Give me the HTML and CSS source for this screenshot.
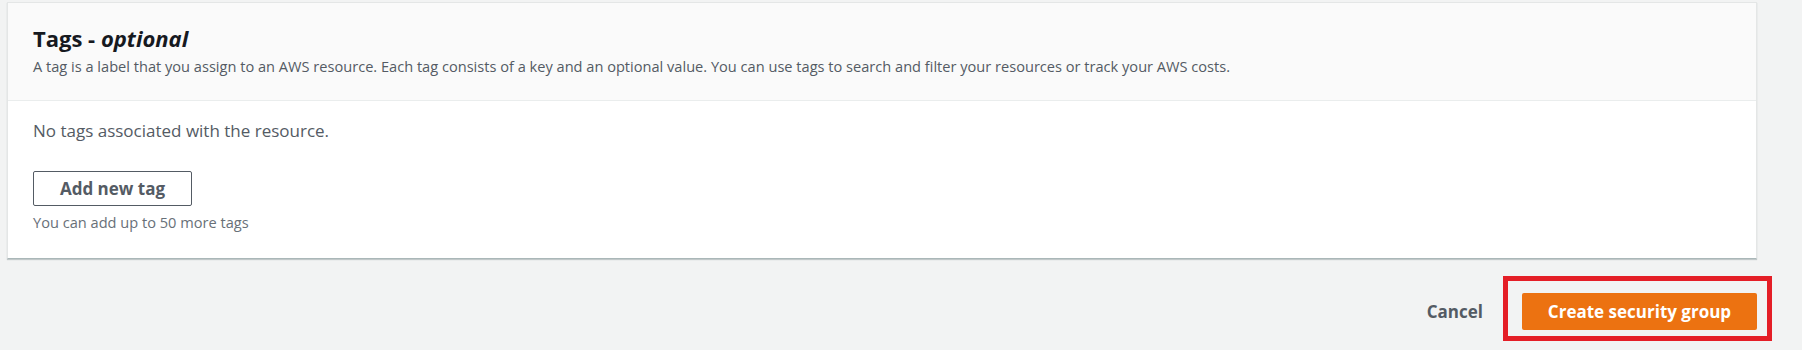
FILE: index.html
```html
<!DOCTYPE html>
<html lang="en">
<head>
    <meta charset="UTF-8">
    <meta name="viewport" content="width=device-width, initial-scale=1.0">
    <title>Create security group - Tags</title>
    <link rel="stylesheet" href="styles.css">
</head>
<body>
    <div class="container">
        <div class="container-header">
            <h2>Tags - <em>optional</em></h2>
            <p class="description">A tag is a label that you assign to an AWS resource. Each tag consists of a key and an optional value. You can use tags to search and filter your resources or track your AWS costs.</p>
        </div>
        <div class="container-body">
            <p class="empty">No tags associated with the resource.</p>
            <button class="btn-normal">Add new tag</button>
            <p class="hint">You can add up to 50 more tags</p>
        </div>
    </div>

    <div class="actions">
        <button class="btn-link">Cancel</button>
        <div class="highlight">
            <button class="btn-primary">Create security group</button>
        </div>
    </div>
</body>
</html>
```

FILE: styles.css
```css
body {
    font-family: "Open Sans", "Noto Sans", Arial, sans-serif;
    margin: 0;
    padding: 2px 45px 19px 7px;
    background-color: #f2f3f3;
    color: #16191f;
}
.container {
    background-color: white;
    border: 1px solid #e4e6e6;
    border-bottom: 1px solid #aab7b8;
    box-shadow: 0 1px 1px rgba(0,28,36,0.2);
}
.container-header {
    background-color: #fafafa;
    border-bottom: 1px solid #eaeded;
    padding: 21px 25px 24px;
}
h2 {
    margin: 0;
    font-size: 22px;
    font-weight: bold;
    line-height: 28px;
}
.description {
    margin: 4px 0 0;
    font-size: 14.6px;
    line-height: 20px;
    color: #545b64;
}
.container-body {
    padding: 18px 25px 26px;
}
.empty {
    margin: 0;
    font-size: 17px;
    line-height: 24px;
    color: #545b64;
}
button {
    font-family: inherit;
    font-weight: bold;
    cursor: pointer;
}
.btn-normal {
    display: block;
    margin-top: 28px;
    width: 159px;
    height: 35px;
    font-size: 17px;
    color: #545b64;
    background-color: white;
    border: 1px solid #545b64;
    border-radius: 2px;
}
.hint {
    margin: 6px 0 0;
    font-size: 14.6px;
    line-height: 20px;
    color: #687078;
}
.actions {
    display: flex;
    justify-content: flex-end;
    align-items: center;
    gap: 31px;
    margin-top: 34px;
}
.btn-link {
    background: none;
    border: none;
    padding: 0 8px;
    font-size: 17px;
    color: #545b64;
}
.highlight {
    position: relative;
}
.highlight::after {
    content: "";
    position: absolute;
    inset: -17px -15px -11px -19px;
    border: 5px solid #e41e26;
    pointer-events: none;
}
.btn-primary {
    display: block;
    width: 235px;
    height: 37px;
    font-size: 17px;
    color: white;
    background-color: #ec7211;
    border: none;
    border-radius: 2px;
}
```
